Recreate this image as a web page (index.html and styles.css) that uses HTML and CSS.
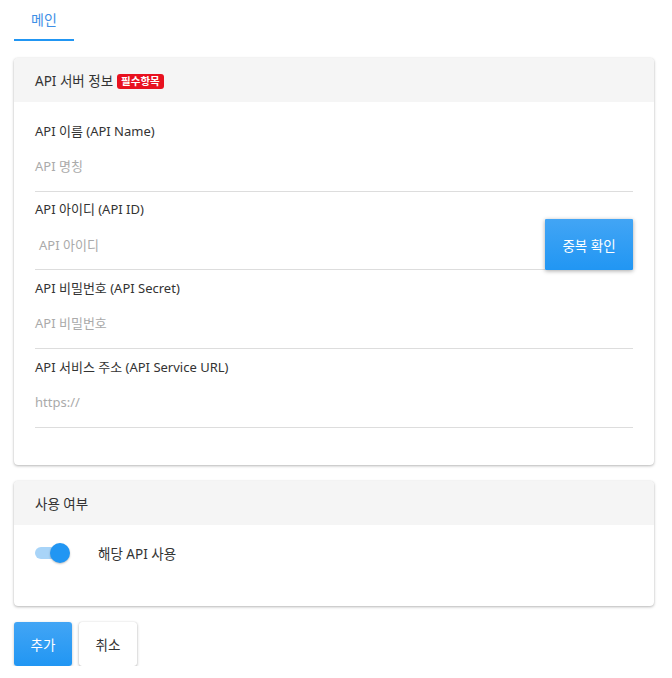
FILE: index.html
```html
<!DOCTYPE html>
<html lang="ko">
<head>
<meta charset="utf-8">
<link rel="stylesheet" href="styles.css">
</head>
<body>
<div class="page">
  <div class="tabs">
    <div class="tab active">메인</div>
  </div>

  <section class="card">
    <div class="card-header">API 서버 정보 <span class="badge">필수항목</span></div>
    <div class="card-body">
      <div class="field">
        <div class="label">API 이름 (API Name)</div>
        <div class="input-row line"><span class="ph">API 명칭</span></div>
      </div>
      <div class="field">
        <div class="label">API 아이디 (API ID)</div>
        <div class="input-row">
          <div class="input line indent"><span class="ph">API 아이디</span></div>
          <button class="btn-check">중복 확인</button>
        </div>
      </div>
      <div class="field">
        <div class="label">API 비밀번호 (API Secret)</div>
        <div class="input-row line"><span class="ph">API 비밀번호</span></div>
      </div>
      <div class="field">
        <div class="label">API 서비스 주소 (API Service URL)</div>
        <div class="input-row line"><span class="ph">https://</span></div>
      </div>
    </div>
  </section>

  <section class="card">
    <div class="card-header">사용 여부</div>
    <div class="card-body2">
      <div class="switch-row">
        <span class="switch"><span class="track"></span><span class="knob"></span></span>
        <span class="switch-label">해당 API 사용</span>
      </div>
    </div>
  </section>

  <div class="actions">
    <button class="btn primary">추가</button>
    <button class="btn plain">취소</button>
  </div>
</div>
</body>
</html>
```
FILE: styles.css
```css
* { box-sizing: border-box; }
html, body { margin: 0; padding: 0; background: #fff; }
body {
  font-family: "Noto Sans", "Noto Sans CJK KR", sans-serif;
  font-size: 13px;
  color: #333;
}
.page { width: 640px; margin-left: 14px; }

.tabs { display: flex; height: 41px; margin-bottom: 17px; }
.tab {
  width: 60px;
  text-align: center;
  line-height: 39px;
  font-size: 14px;
  color: #3d8fe6;
  border-bottom: 2px solid #2196f3;
}

.card {
  background: #fff;
  border-radius: 4px;
  box-shadow: 0 1px 3px rgba(0,0,0,.28), 0 0 1px rgba(0,0,0,.12);
  margin-bottom: 16px;
  overflow: hidden;
}
.card-header {
  height: 44px;
  background: #f5f5f5;
  padding-left: 21px;
  display: flex;
  align-items: center;
  gap: 4px;
  font-size: 13.5px;
  color: #333;
}
.badge {
  display: inline-block;
  background: #e8111f;
  color: #fff;
  font-size: 10.5px;
  font-weight: 700;
  line-height: 15px;
  padding: 0 4px;
  border-radius: 3px;
  margin-top: 2px;
}
.card-body { padding: 11px 21px 37.7px; }
.field { padding-top: 7.67px; }
.label { line-height: 20px; height: 20px; color: #333; }
.input-row {
  height: 51px;
  display: flex;
  align-items: center;
}
.line { border-bottom: 1px solid #ddd; }
.input { flex: 1; height: 51px; display: flex; align-items: center; }
.indent { padding-left: 4px; }
.ph { color: #aaa; }
.btn-check {
  width: 88px;
  height: 51px;
  margin-top: -2px;
  align-self: flex-end;
  border: 0;
  color: #fff;
  font-family: inherit;
  font-size: 13.5px;
  background: linear-gradient(#42a5f5, #2196f3);
  box-shadow: 0 1px 4px rgba(0,0,0,.35);
  border-radius: 1px;
}

.card-body2 { height: 81px; padding: 17px 21px 0; }
.switch-row { display: flex; align-items: center; height: 22px; }
.switch { position: relative; width: 36px; height: 22px; display: inline-block; }
.track {
  position: absolute; left: 0; top: 5px;
  width: 32px; height: 12px;
  border-radius: 6px;
  background: #a8d4f8;
}
.knob {
  position: absolute; left: 15px; top: 1px;
  width: 20px; height: 20px; border-radius: 50%;
  background: #2196f3;
  box-shadow: 0 1px 2px rgba(0,0,0,.25);
}
.switch-label { margin-left: 27px; color: #333; font-size: 13.5px; }

.actions { display: flex; gap: 7px; }
.btn {
  width: 58px; height: 44px;
  border: 0; border-radius: 3px;
  font-family: inherit; font-size: 13.5px;
}
.primary {
  color: #fff;
  background: linear-gradient(#42a5f5, #2196f3);
  box-shadow: 0 1px 3px rgba(0,0,0,.25);
}
.plain {
  background: #fff; color: #333;
  box-shadow: 0 1px 3px rgba(0,0,0,.3), 0 0 1px rgba(0,0,0,.15);
}
```
